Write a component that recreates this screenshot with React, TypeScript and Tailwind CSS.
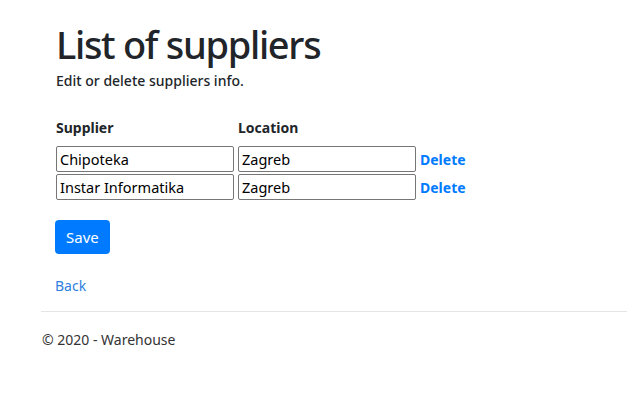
import React from 'react';

const suppliers = [
  { name: 'Chipoteka', location: 'Zagreb' },
  { name: 'Instar Informatika', location: 'Zagreb' },
];

export default function App() {
  return (
    <div className="min-h-screen bg-white text-[#212529]" style={{ fontFamily: '"Noto Sans", "Open Sans", sans-serif' }}>
      <main className="pl-[56px] pt-[20px]">
        <h1 className="text-[38px] leading-[48px] font-medium tracking-[-1.3px]">List of suppliers</h1>
        <p className="mt-[3px] text-[14px] leading-[20px] font-medium">Edit or delete suppliers info.</p>

        <div className="mt-[26px] flex gap-[4px] text-[14px] font-bold">
          <div className="w-[178px]">Supplier</div>
          <div className="w-[178px]">Location</div>
        </div>

        <div className="mt-[8px] flex flex-col gap-[2px]">
          {suppliers.map((s) => (
            <div key={s.name} className="flex items-center gap-[4px]">
              <input
                defaultValue={s.name}
                className="w-[178px] h-[26px] border border-[#767676] rounded-[2px] px-[3px] text-[14.5px] text-black outline-none"
              />
              <input
                defaultValue={s.location}
                className="w-[178px] h-[26px] border border-[#767676] rounded-[2px] px-[3px] text-[14.5px] text-black outline-none"
              />
              <a href="#" className="text-[14px] font-bold text-[#007bff]">Delete</a>
            </div>
          ))}
        </div>

        <button className="mt-[20px] -ml-[1px] h-[34px] px-[11px] rounded-[4px] bg-[#007bff] text-white text-[15px]">Save</button>

        <div className="mt-[19px] -ml-[1px]">
          <a href="#" className="text-[14px] text-[#2f7fe0]">Back</a>
        </div>
      </main>

      <footer className="ml-[41px] mt-[14px] border-t border-[#e5e5e5] pt-[17px]">
        <p className="pl-[1px] text-[14px] text-[#333]">© 2020 - Warehouse</p>
      </footer>
    </div>
  );
}
